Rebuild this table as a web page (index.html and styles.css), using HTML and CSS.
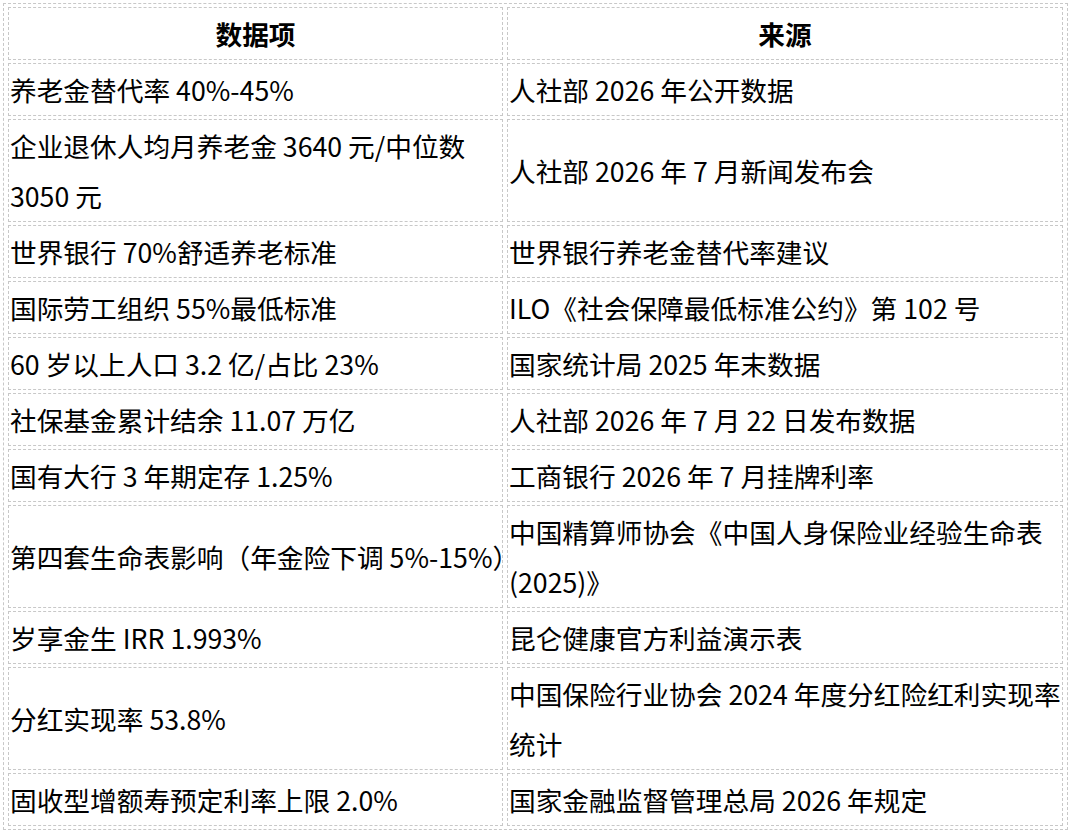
FILE: index.html
```html
<!DOCTYPE html>
<html lang="zh-CN">
<head>
<meta charset="utf-8">
<title>数据来源</title>
<link rel="stylesheet" href="styles.css">
</head>
<body>
<div class="wrap">
<table class="data">
<thead>
<tr><th class="c1">数据项</th><th class="c2">来源</th></tr>
</thead>
<tbody>
<tr><td>养老金替代率 40%-45%</td><td>人社部 2026 年公开数据</td></tr>
<tr><td>企业退休人均月养老金 3640 元/中位数 3050 元</td><td>人社部 2026 年 7 月新闻发布会</td></tr>
<tr><td>世界银行 70%舒适养老标准</td><td>世界银行养老金替代率建议</td></tr>
<tr><td>国际劳工组织 55%最低标准</td><td>ILO《社会保障最低标准公约》第 102 号</td></tr>
<tr><td>60 岁以上人口 3.2 亿/占比 23%</td><td>国家统计局 2025 年末数据</td></tr>
<tr><td>社保基金累计结余 11.07 万亿</td><td>人社部 2026 年 7 月 22 日发布数据</td></tr>
<tr><td>国有大行 3 年期定存 1.25%</td><td>工商银行 2026 年 7 月挂牌利率</td></tr>
<tr><td class="nowrap">第四套生命表影响（年金险下调 5%-15%）</td><td>中国精算师协会《中国人身保险业经验生命表(2025)》</td></tr>
<tr><td>岁享金生 IRR 1.993%</td><td>昆仑健康官方利益演示表</td></tr>
<tr><td>分红实现率 53.8%</td><td>中国保险行业协会 2024 年度分红险红利实现率统计</td></tr>
<tr><td>固收型增额寿预定利率上限 2.0%</td><td>国家金融监督管理总局 2026 年规定</td></tr>
</tbody>
</table>
</div>
</body>
</html>
```

FILE: styles.css
```css
html, body {
  margin: 0;
  padding: 0;
  background: #ffffff;
}
.wrap {
  padding: 3px;
}
.data {
  width: 1065px;
  border: 1px dashed #c8c8c8;
  border-collapse: separate;
  border-spacing: 4px 3px;
  font-family: "Noto Sans CJK SC", "Noto Sans", sans-serif;
  font-size: 26.7px;
  line-height: 50px;
  color: #000;
  table-layout: fixed;
}
.data th,
.data td {
  border: 1px dashed #c8c8c8;
  padding: 0.5px 1px;
  vertical-align: middle;
  text-align: left;
  font-weight: normal;
}
.data th {
  text-align: center;
  font-weight: bold;
}
.data .c1 { width: 491px; }
.data .c2 { width: auto; }
.nowrap { white-space: nowrap; }
```
